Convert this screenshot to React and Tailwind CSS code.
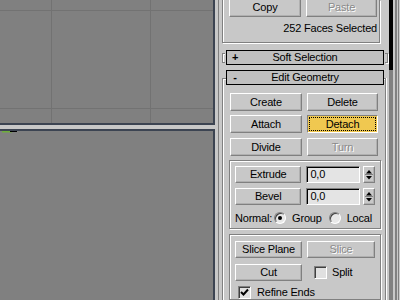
import clsx from "clsx";

const raised =
	"border border-t-white border-l-white border-r-[#808080] border-b-[#808080] shadow-[inset_-1px_-1px_0_#b0b0b0]";
const sunken =
	"border border-t-[#808080] border-l-[#808080] border-r-white border-b-white";
const groove = "border-[#808080]";

const Btn = ({ children, className, disabled }) => (
	<div
		className={clsx(
			"flex items-center justify-center leading-none",
			raised,
			disabled && "text-[#8a8a8a] [text-shadow:1px_1px_0_#fff]",
			className,
		)}
	>
		{children}
	</div>
);

const Header = ({ sign, label, className }) => (
	<div
		className={clsx(
			"flex h-[15px] w-[158px] items-center border border-black bg-[#c0c0c0] leading-none",
			className,
		)}
	>
		<span className="w-[16px] text-center font-bold">{sign}</span>
		<span className="flex-1 text-center">{label}</span>
		<span className="w-[16px]" />
	</div>
);

const Field = () => (
	<>
		<div
			className={clsx(
				"ml-[5px] flex h-[17px] w-[54px] items-center bg-[#e4e4e4] pl-[3px] leading-none shadow-[inset_1px_1px_0_#000]",
				sunken,
			)}
		>
			0,0
		</div>
		<div className={clsx("ml-[3px] flex h-[17px] w-[12px] items-center justify-center", raised)}>
			<svg width="10" height="15" viewBox="0 0 10 15">
				<path d="M5 3 L8 6.5 L2 6.5 Z" fill="#000" />
				<line x1="1" y1="7.5" x2="9" y2="7.5" stroke="#808080" />
				<path d="M2 9 L8 9 L5 12.5 Z" fill="#000" />
			</svg>
		</div>
	</>
);

const Radio = ({ on }) => (
	<div
		className={clsx(
			"flex h-[12px] w-[12px] items-center justify-center rounded-full bg-[#e8e8e8] shadow-[inset_1px_1px_0_#404040]",
			sunken,
		)}
	>
		{on && <div className="h-[4px] w-[4px] rounded-full bg-black" />}
	</div>
);

const Check = ({ on }) => (
	<div
		className={clsx(
			"flex h-[13px] w-[13px] items-center justify-center bg-[#e0e0e0] shadow-[inset_1px_1px_0_#404040]",
			sunken,
		)}
	>
		{on && (
			<svg width="9" height="9" viewBox="0 0 9 9">
				<path d="M1 4 L3.5 6.5 L8 1.5" fill="none" stroke="#000" strokeWidth="2" />
			</svg>
		)}
	</div>
);

export default function App() {
	return (
		<div className="flex h-[300px] w-[400px] overflow-hidden bg-[#c8c8c8] font-['Liberation_Sans',Arial,sans-serif] text-[11px] tracking-[-0.2px] text-black">
			{/* Viewports */}
			<div className="flex w-[215px] flex-col">
				<div className="h-[125px] border-r-2 border-b-2 border-[#3c4452] bg-[#808080]">
					<svg width="213" height="123" className="block">
						<g stroke="#727272" strokeWidth="1">
							<line x1="51.5" y1="0" x2="51.5" y2="123" />
							<line x1="150.5" y1="0" x2="150.5" y2="123" />
							<line x1="0" y1="10.5" x2="213" y2="10.5" />
							<line x1="0" y1="108.5" x2="213" y2="108.5" />
						</g>
					</svg>
				</div>
				<div className="h-[4px]" />
				<div className="flex-1 border-r-2 border-t-2 border-[#3c4452] bg-[#808080]">
					<svg width="20" height="4" className="block">
						<line x1="2" y1="0.5" x2="12" y2="0.5" stroke="#6fae3a" strokeWidth="2" />
						<line x1="10" y1="0.5" x2="17" y2="0.5" stroke="#000" />
					</svg>
				</div>
			</div>

			{/* Command panel */}
			<div className="flex w-[185px]">
				<div className="w-[3px]" />
				<div className="w-px bg-[#808080]" />
				<div className="flex w-[170px] flex-col">
					{/* Selection rollout (bottom part) */}
					<div
						className={clsx(
							"ml-[3px] flex h-[43px] w-[158px] flex-col border-x border-b shadow-[inset_1px_0_0_#fff,1px_1px_0_#fff]",
							groove,
						)}
					>
						<div className="-mt-[3px] flex gap-[5px] pl-[6px]">
							<Btn className="h-[20px] w-[72px]">Copy</Btn>
							<Btn className="h-[20px] w-[71px]" disabled>
								Paste
							</Btn>
						</div>
						<div className="mt-[5px] pr-[2px] text-right leading-[13px]">252 Faces Selected</div>
					</div>

					{/* Soft Selection (collapsed) */}
					<div className="mt-[7px] ml-[3px] flex items-center">
						<div className={clsx("h-[10px] w-[3px] border-y border-l shadow-[inset_1px_1px_0_#fff]", groove)} />
						<Header sign="+" label="Soft Selection" className="ml-px" />
						<div className={clsx("ml-px h-[10px] w-[3px] border-y border-r shadow-[1px_1px_0_#fff]", groove)} />
					</div>

					{/* Edit Geometry */}
					<div
						className={clsx(
							"mt-[13px] ml-[3px] flex w-[164px] flex-1 flex-col border-x border-t shadow-[inset_1px_1px_0_#fff,1px_0_0_#fff]",
							groove,
						)}
					>
						<Header sign="-" label="Edit Geometry" className="-mt-[9px] ml-[3px]" />

						<div className="mt-[8px] flex gap-[5px] pl-[7px]">
							<Btn className="h-[18px] w-[72px]">Create</Btn>
							<Btn className="h-[18px] w-[71px]">Delete</Btn>
						</div>
						<div className="mt-[4px] flex gap-[5px] pl-[7px]">
							<Btn className="h-[18px] w-[72px]">Attach</Btn>
							<div
								className={clsx(
									"flex h-[18px] w-[71px] items-center justify-center bg-[#f0c850] p-px leading-none",
									sunken,
								)}
							>
								<div className="flex h-full w-full items-center justify-center border border-dotted border-black">
									Detach
								</div>
							</div>
						</div>
						<div className="mt-[5px] flex gap-[5px] pl-[7px]">
							<Btn className="h-[18px] w-[72px]">Divide</Btn>
							<Btn className="h-[18px] w-[71px]" disabled>
								Turn
							</Btn>
						</div>

						{/* Extrude / Bevel group */}
						<div
							className={clsx(
								"mt-[4px] ml-[6px] flex w-[152px] flex-col border px-[5px] pt-[5px] pb-[2px] shadow-[inset_1px_1px_0_#fff,1px_1px_0_#fff]",
								groove,
							)}
						>
							<div className="flex items-center">
								<Btn className="h-[17px] w-[67px]">Extrude</Btn>
								<Field />
							</div>
							<div className="mt-[5px] flex items-center">
								<Btn className="h-[17px] w-[67px]">Bevel</Btn>
								<Field />
							</div>
							<div className="mt-[5px] flex h-[16px] items-center leading-none">
								<span>Normal:</span>
								<div className="ml-[2px]">
									<Radio on />
								</div>
								<span className="ml-[6px]">Group</span>
								<div className="ml-[7px]">
									<Radio />
								</div>
								<span className="ml-[6px]">Local</span>
							</div>
						</div>

						{/* Slice group */}
						<div
							className={clsx(
								"mt-[5px] ml-[6px] flex w-[152px] flex-1 flex-col border px-[5px] pt-[6px] shadow-[inset_1px_1px_0_#fff,1px_1px_0_#fff]",
								groove,
							)}
						>
							<div className="flex gap-[5px]">
								<Btn className="h-[17px] w-[67px]">Slice Plane</Btn>
								<Btn className="h-[17px] w-[68px]" disabled>
									Slice
								</Btn>
							</div>
							<div className="mt-[6px] flex items-center">
								<Btn className="h-[17px] w-[67px]">Cut</Btn>
								<div className="ml-[12px]">
									<Check />
								</div>
								<span className="ml-[5px] leading-none">Split</span>
							</div>
							<div className="mt-[5px] flex items-center pl-[3px]">
								<Check on />
								<span className="ml-[6px] leading-none">Refine Ends</span>
							</div>
						</div>
					</div>
				</div>

				{/* Scrollbar */}
				<div className="flex w-[11px]">
					<div className="flex w-[4px] flex-col">
						<div className="h-[70px] bg-black" />
						<div className="flex-1 bg-[#808080]" />
					</div>
					<div className="ml-[2px] w-[2px] bg-[#808080]" />
					<div className="ml-px w-px bg-[#808080]" />
				</div>
			</div>
		</div>
	);
}
